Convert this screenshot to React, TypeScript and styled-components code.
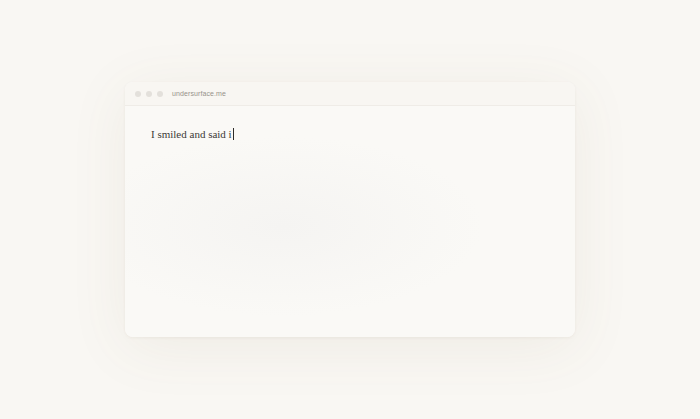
import React from "react";
import styled, { createGlobalStyle } from "styled-components";

const Global = createGlobalStyle`
  html, body { margin: 0; padding: 0; }
  body { background: #f9f7f3; }
`;

const Page = styled.div`
  width: 700px;
  height: 419px;
  display: flex;
  justify-content: center;
  padding-top: 82px;
  box-sizing: border-box;
  background: #f9f7f3;
`;

const Window = styled.div`
  width: 450px;
  height: 255px;
  border-radius: 8px;
  background: #faf9f6;
  box-shadow: 0 1px 3px rgba(120, 100, 70, 0.07), 0 10px 60px rgba(120, 100, 70, 0.08);
  display: flex;
  flex-direction: column;
  overflow: hidden;
`;

const TitleBar = styled.div`
  height: 23px;
  flex: none;
  display: flex;
  align-items: center;
  gap: 5px;
  padding-left: 10px;
  border-bottom: 1px solid #efece7;
  background: #f8f6f2;
`;

const Dot = styled.span`
  width: 6px;
  height: 6px;
  border-radius: 50%;
  background: #e3e0db;
`;

const Url = styled.span`
  margin-left: 4px;
  font-family: "Liberation Sans", Arial, sans-serif;
  font-size: 7px;
  color: #97928b;
  letter-spacing: 0.1px;
`;

const Body = styled.div`
  flex: 1;
  padding: 22px 26px;
  background: radial-gradient(ellipse 200px 90px at 35% 52%, #f5f4f2 0%, #faf9f6 100%);
`;

const Line = styled.p`
  margin: 0;
  font-family: "Liberation Serif", "Times New Roman", serif;
  font-size: 11px;
  color: #3c3a37;
  display: flex;
  align-items: center;
`;

const Caret = styled.span`
  display: inline-block;
  width: 1px;
  height: 12px;
  margin-left: 1px;
  background: #2e2c29;
`;

export default function App() {
  return (
    <>
      <Global />
      <Page>
        <Window>
          <TitleBar>
            <Dot />
            <Dot />
            <Dot />
            <Url>undersurface.me</Url>
          </TitleBar>
          <Body>
            <Line>
              I smiled and said i<Caret />
            </Line>
          </Body>
        </Window>
      </Page>
    </>
  );
}
